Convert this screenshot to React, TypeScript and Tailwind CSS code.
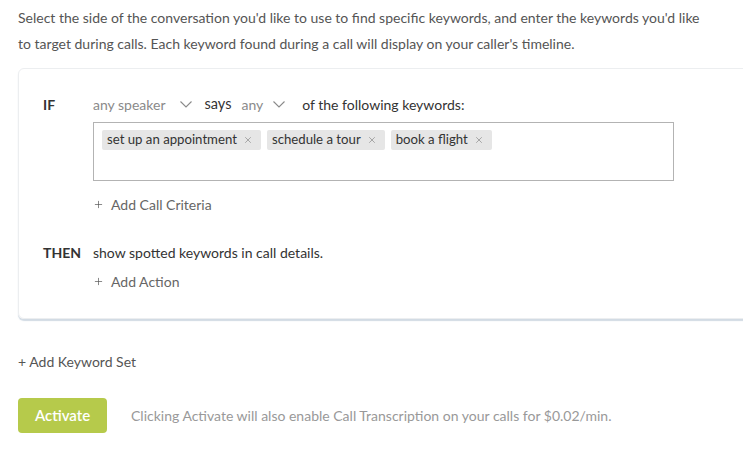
import { Plus, X } from 'lucide-react';

const keywords = ['set up an appointment', 'schedule a tour', 'book a flight'];

function Chevron({ className }: { className?: string }) {
  return (
    <svg className={className} width="12" height="7" viewBox="0 0 12 7" fill="none" stroke="#8a8a8a" strokeWidth="1.1">
      <polyline points="0.5,0.5 6,6 11.5,0.5" />
    </svg>
  );
}

function Tag({ label }: { label: string }) {
  return (
    <span className="flex h-[20px] items-center gap-[6px] rounded-[2px] bg-[#e6e6e6] pl-[5px] pr-[8px] text-[13.2px] text-[#333]">
      {label}
      <X className="h-[10px] w-[10px] text-[#777]" strokeWidth={1.4} />
    </span>
  );
}

export default function App() {
  return (
    <div className="h-[450px] w-[743px] overflow-hidden bg-white pl-[18px] font-['Lato',sans-serif] text-[#444]">
      {/* Intro text */}
      <p className="pt-[5px] text-[14px] leading-[26px] text-[#555]">
        Select the side of the conversation you'd like to use to find specific keywords, and enter the keywords you'd like
        <br />
        to target during calls. Each keyword found during a call will display on your caller's timeline.
      </p>

      {/* Keyword set card */}
      <div className="mt-[11px] w-[760px] rounded-[6px] border border-[#eceef0] shadow-[0_2px_1px_rgba(180,195,210,0.6)]">
        <div className="flex pl-[24px] pt-[24px]">
          <div className="w-[50px] pt-[1px] text-[14px] font-bold text-[#333]">IF</div>
          <div className="flex flex-col">
            <div className="flex h-[22px] items-center text-[14px]">
              <span className="text-[#8a8a8a]">any speaker</span>
              <Chevron className="ml-[14px]" />
              <span className="ml-[13px] text-[14.5px] text-[#333]">says</span>
              <span className="ml-[10px] text-[#8a8a8a]">any</span>
              <Chevron className="ml-[10px]" />
              <span className="ml-[17px] text-[#333]">of the following keywords:</span>
            </div>
            <div className="mt-[7px] flex h-[59px] w-[581px] items-start gap-[6px] border border-[#b3b3b3] pl-[8px] pt-[7px]">
              {keywords.map((k) => (
                <Tag key={k} label={k} />
              ))}
            </div>
            <div className="mt-[13px] flex items-center gap-[7px] text-[14px] text-[#666]">
              <Plus className="h-[11px] w-[11px] text-[#555]" strokeWidth={1.5} />
              Add Call Criteria
            </div>
          </div>
        </div>

        <div className="flex pl-[24px] pt-[27px]">
          <div className="w-[50px] text-[14px] font-bold text-[#333]">THEN</div>
          <div className="flex flex-col">
            <div className="text-[14px] text-[#333]">show spotted keywords in call details.</div>
            <div className="mt-[8px] flex items-center gap-[7px] text-[14px] text-[#666]">
              <Plus className="h-[11px] w-[11px] text-[#555]" strokeWidth={1.5} />
              Add Action
            </div>
          </div>
        </div>
        <div className="h-[26px]" />
      </div>

      <div className="mt-[32px] text-[14px] text-[#555]">+ Add Keyword Set</div>

      <div className="mt-[26px] flex items-center">
        <button className="h-[35px] w-[89px] rounded-[4px] bg-[#b6ca4b] text-[15px] font-semibold text-white">
          Activate
        </button>
        <span className="ml-[24px] text-[14px] text-[#999]">
          Clicking Activate will also enable Call Transcription on your calls for $0.02/min.
        </span>
      </div>
    </div>
  );
}
